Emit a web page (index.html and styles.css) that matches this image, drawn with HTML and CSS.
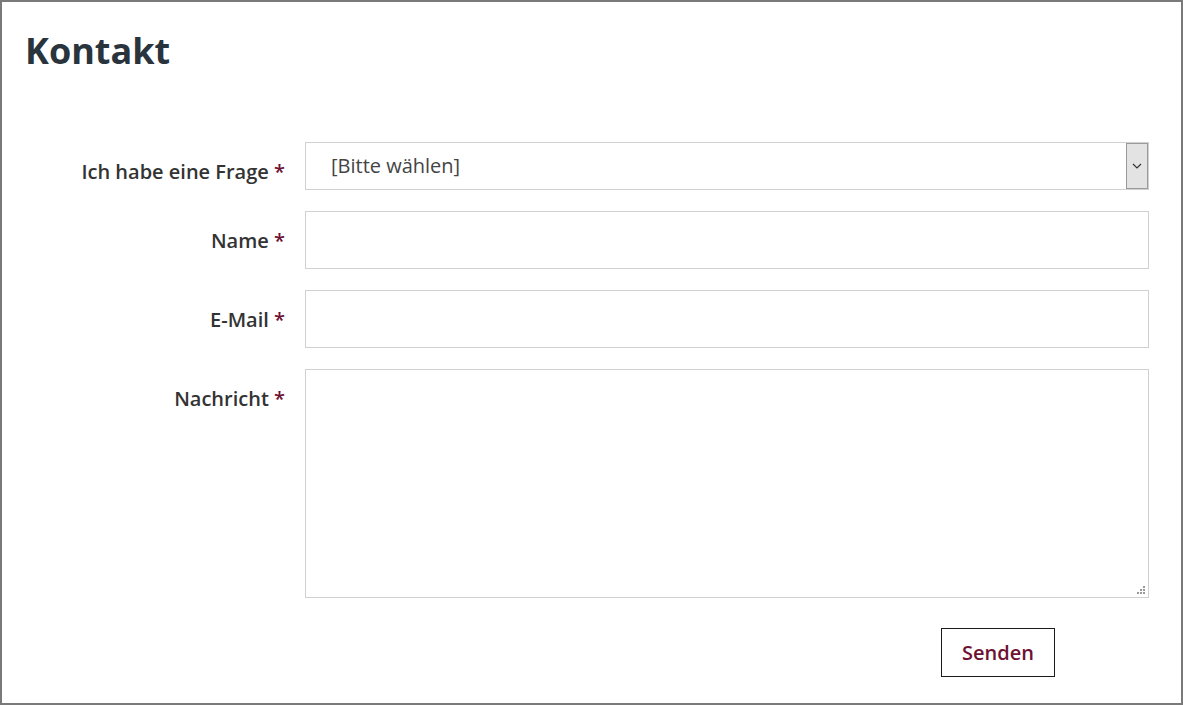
FILE: index.html
```html
<!DOCTYPE html>
<html lang="de">

<head>
  <meta charset="UTF-8">
  <meta name="viewport" content="width=device-width, initial-scale=1.0">
  <title>Kontakt</title>
  <link rel="stylesheet" href="styles.css">
</head>

<body>
  <div class="frame">
    <h1 class="page-title">Kontakt</h1>

    <form class="contact-form" onsubmit="return false">
      <label class="form-label" for="topic">Ich habe eine Frage <span class="req">*</span></label>
      <div class="select-box">
        <span class="select-text" id="topic">[Bitte wählen]</span>
        <span class="select-btn">
          <svg width="10" height="6" viewBox="0 0 10 6"><path d="M1 1 L5 5 L9 1" fill="none" stroke="#333" stroke-width="1.2"/></svg>
        </span>
      </div>

      <label class="form-label" for="name">Name <span class="req">*</span></label>
      <input class="field" type="text" id="name">

      <label class="form-label" for="email">E-Mail <span class="req">*</span></label>
      <input class="field" type="email" id="email">

      <label class="form-label" for="msg">Nachricht <span class="req">*</span></label>
      <div class="area-wrap">
        <textarea class="field area" id="msg"></textarea>
        <span class="grip"></span>
      </div>

      <div></div>
      <div class="actions">
        <button class="send-btn" type="submit">Senden</button>
      </div>
    </form>
  </div>
</body>

</html>
```

FILE: styles.css
```css
html, body {
  margin: 0;
  padding: 0;
}

body {
  font-family: "Open Sans", "Liberation Sans", sans-serif;
  color: #333;
  background: #fff;
}

.frame {
  box-sizing: border-box;
  width: 1183px;
  height: 705px;
  border: 2px solid #7a7a7a;
  padding: 27px 32px 0 21px;
}

.page-title {
  margin: 0 0 0 2px;
  font-size: 36px;
  line-height: 44px;
  font-weight: 700;
  color: #2a343d;
}

.contact-form {
  display: grid;
  grid-template-columns: 262px 1fr;
  column-gap: 20px;
  row-gap: 21px;
  margin-top: 69px;
}

.form-label {
  text-align: right;
  font-size: 20px;
  line-height: 26px;
  font-weight: 600;
  color: #333;
  padding-top: 17px;
}

.req {
  color: #6d1232;
}

.select-box {
  box-sizing: border-box;
  height: 48px;
  border: 1px solid #d0d0d0;
  display: flex;
  align-items: stretch;
}

.select-text {
  flex: 1;
  padding-left: 25px;
  font-size: 20px;
  line-height: 46px;
  color: #444;
}

.select-btn {
  width: 20px;
  background: #e3e3e3;
  border: 1px solid #9a9a9a;
  display: flex;
  align-items: center;
  justify-content: center;
}

.field {
  box-sizing: border-box;
  height: 58px;
  width: 100%;
  border: 1px solid #d0d0d0;
  margin: 0;
  padding: 0 12px;
  font: inherit;
  font-size: 20px;
  outline: none;
}

.area-wrap {
  position: relative;
  height: 229px;
}

.area {
  height: 229px;
  resize: none;
  display: block;
}

.grip {
  position: absolute;
  right: 3px;
  bottom: 3px;
  width: 9px;
  height: 9px;
  background:
    linear-gradient(#999, #999) 6px 0 / 2px 2px no-repeat,
    linear-gradient(#999, #999) 3px 3px / 2px 2px no-repeat,
    linear-gradient(#999, #999) 6px 3px / 2px 2px no-repeat,
    linear-gradient(#999, #999) 0 6px / 2px 2px no-repeat,
    linear-gradient(#999, #999) 3px 6px / 2px 2px no-repeat,
    linear-gradient(#999, #999) 6px 6px / 2px 2px no-repeat;
}

.actions {
  padding-top: 9px;
  padding-left: 636px;
}

.send-btn {
  box-sizing: border-box;
  width: 114px;
  height: 49px;
  background: #fff;
  border: 1px solid #1a1a1a;
  font-family: inherit;
  font-size: 20px;
  font-weight: 600;
  color: #6d1232;
  cursor: pointer;
}
```
